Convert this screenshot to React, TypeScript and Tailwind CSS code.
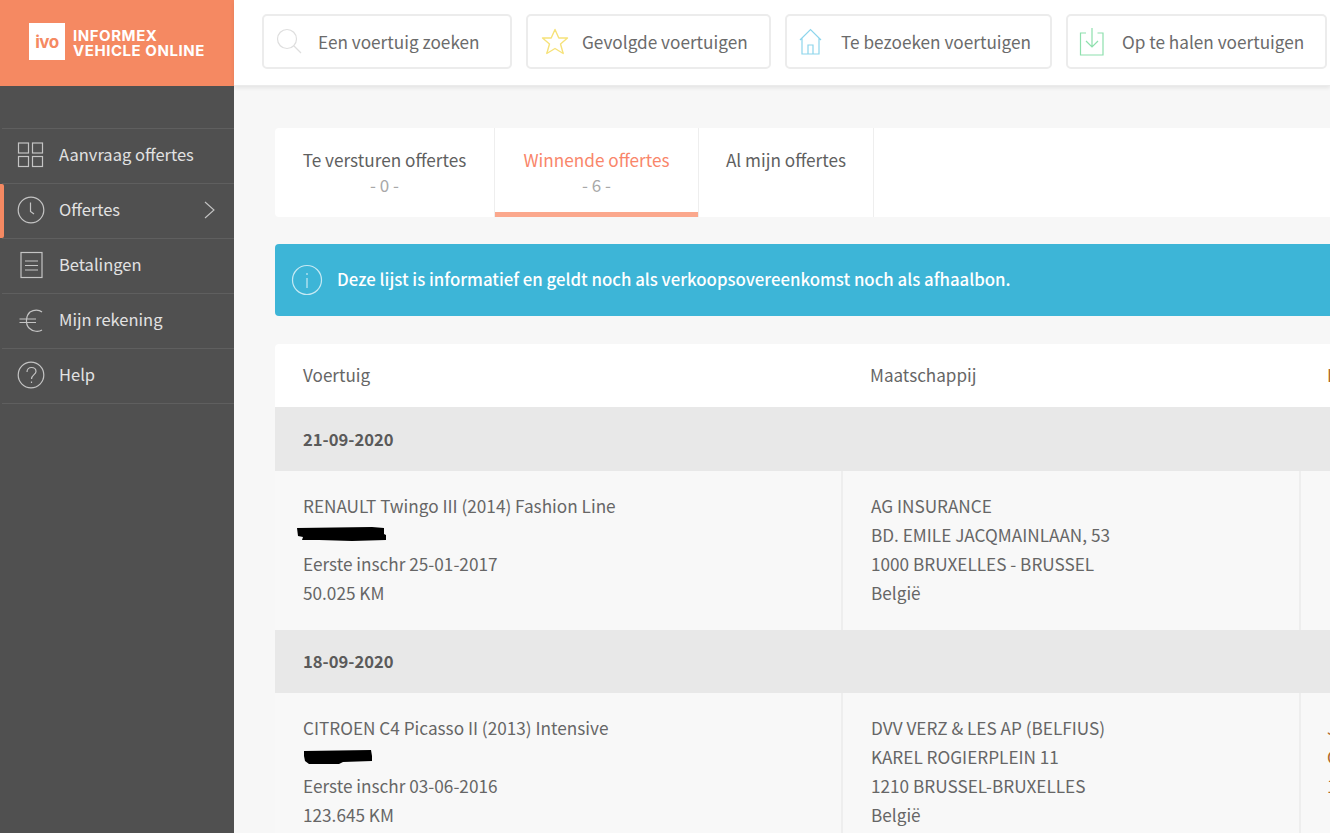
import { ReactNode } from "react";

const menu = [
  { label: "Aanvraag offertes", icon: "grid" },
  { label: "Offertes", icon: "clock", active: true },
  { label: "Betalingen", icon: "doc" },
  { label: "Mijn rekening", icon: "euro" },
  { label: "Help", icon: "help" },
];

function MenuIcon({ name }: { name: string }) {
  return (
    <svg width="30" height="30" viewBox="0 0 30 30" fill="none" stroke="#c4c4c4" strokeWidth="1.2">
      {name === "grid" && (
        <>
          <rect x="2.5" y="3" width="10" height="10" />
          <rect x="16.5" y="3" width="10" height="10" />
          <rect x="2.5" y="16.5" width="10" height="10" />
          <rect x="16.5" y="16.5" width="10" height="10" />
        </>
      )}
      {name === "clock" && (
        <>
          <circle cx="15" cy="15" r="12.8" />
          <path d="M14.5 7.5V16.5L18 19" />
        </>
      )}
      {name === "doc" && (
        <>
          <rect x="5" y="2.5" width="21" height="25" />
          <path d="M9 11H22M9 15.5H22M9 20H22" />
        </>
      )}
      {name === "euro" && (
        <path d="M26 7C23 4.5 18 4.5 14 7C10 10.5 9 19 13 23C17 27 23 27 26 25M3.5 14H20M3.5 17.5H20" />
      )}
      {name === "help" && (
        <>
          <circle cx="15" cy="15" r="12.8" />
          <path d="M11 12C11 9 13 7.5 15.5 7.5C18 7.5 20 9 20 11.5C20 14.5 15.5 15 15.5 19M15.5 21.5V23" />
        </>
      )}
    </svg>
  );
}

function Sidebar() {
  return (
    <aside className="w-[234px] shrink-0 flex flex-col bg-[#505050]">
      <div className="h-[86px] bg-[#f58962] flex items-center pl-[29px] gap-[8px] pb-[3px] shrink-0">
        <div className="w-[36px] h-[37px] bg-white flex items-center justify-center text-[#f58962] text-[17px] font-bold pt-[3px] font-['Inter',sans-serif] tracking-tight">
          ivo
        </div>
        <div className="text-white text-[15px] font-bold leading-[15px] tracking-[0.55px] font-['Inter',sans-serif] mt-[3px]">
          <div>INFORMEX</div>
          <div className="whitespace-nowrap">VEHICLE ONLINE</div>
        </div>
      </div>
      <nav className="mt-[42px] border-t border-[#5f5f5f] ml-[2px]">
        {menu.map((m) => (
          <div key={m.label} className="relative h-[55px] flex items-center border-b border-[#5f5f5f] pl-[14px] pb-[2px] text-[#e2e2e2] text-[16.5px]">
            {m.active && <div className="absolute left-[-2px] top-0 bottom-0 w-[4px] rounded-r-[2px] bg-[#f58962]" />}
            <MenuIcon name={m.icon} />
            <span className="ml-[13px] mb-[2px]">{m.label}</span>
            {m.active && (
              <svg className="absolute right-[18px] top-[16px]" width="13" height="20" viewBox="0 0 13 20" fill="none" stroke="#c4c4c4" strokeWidth="1.1">
                <path d="M2 2L11 10L2 18" />
              </svg>
            )}
          </div>
        ))}
      </nav>
    </aside>
  );
}

function TopButton({ w, icon, label }: { w: string; icon: ReactNode; label: string }) {
  return (
    <div className={`${w} h-[55px] shrink-0 flex items-center bg-white border-2 border-[#ececec] rounded-[5px] text-[#6b6b6b] text-[17.2px]`}>
      <div className="w-[54px] pl-[12px]">{icon}</div>
      <span className="whitespace-nowrap">{label}</span>
    </div>
  );
}

function TopBar() {
  return (
    <header className="h-[86px] shrink-0 bg-white shadow-[0_2px_4px_rgba(0,0,0,0.08)] border-b border-[#ebebeb] flex gap-[14px] pl-[28px] pt-[14px] relative">
      <TopButton
        w="w-[250px]"
        label="Een voertuig zoeken"
        icon={
          <svg className="-ml-px" width="30" height="30" viewBox="0 0 30 30" fill="none" stroke="#dedede" strokeWidth="1.2">
            <circle cx="12" cy="12" r="9.5" />
            <path d="M19 19L26 26" />
          </svg>
        }
      />
      <TopButton
        w="w-[245px]"
        label="Gevolgde voertuigen"
        icon={
          <svg width="30" height="30" viewBox="0 0 30 30" fill="none" stroke="#f6e27a" strokeWidth="1.4">
            <path d="M15 2.5L18.8 11H27.5L20.5 17L23.2 26.5L15 21.5L6.8 26.5L9.5 17L2.5 11H11.2Z" strokeLinejoin="round" />
          </svg>
        }
      />
      <TopButton
        w="w-[267px]"
        label="Te bezoeken voertuigen"
        icon={
          <svg className="-ml-[3px]" width="30" height="30" viewBox="0 0 30 30" fill="none" stroke="#8dd5ec" strokeWidth="1.2">
            <path d="M4 13L14.5 2.5L25 13M6 11V27H23V11M12 27V18H17V27" />
          </svg>
        }
      />
      <TopButton
        w="w-[261px]"
        label="Op te halen voertuigen"
        icon={
          <svg className="-ml-[3px]" width="30" height="30" viewBox="0 0 30 30" fill="none" stroke="#8ee0ad" strokeWidth="1.2">
            <path d="M9 6H3.5V28H26V6H20.5M15 1V19M9 14L15 20L21 14" />
          </svg>
        }
      />
    </header>
  );
}

function Tabs() {
  const tabs = [
    { label: "Te versturen offertes", count: "- 0 -", w: "w-[220px]" },
    { label: "Winnende offertes", count: "- 6 -", w: "w-[204px]", active: true },
    { label: "Al mijn offertes", w: "w-[175px]" },
  ];
  return (
    <div className="h-[89px] bg-white rounded-l-[4px] flex shrink-0">
      {tabs.map((t) => (
        <div key={t.label} className={`${t.w} relative border-r border-[#eeeeee] text-center pt-[20px] text-[17.2px] leading-[24px] ${t.active ? "text-[#f9866a]" : "text-[#5f5f5f]"}`}>
          <div>{t.label}</div>
          {t.count && <div className="text-[#a8a8a8] text-[17px] leading-[25px]">{t.count}</div>}
          {t.active && <div className="absolute left-0 right-0 bottom-0 h-[5px] bg-[#fba88d]" />}
        </div>
      ))}
    </div>
  );
}

function Notice() {
  return (
    <div className="mt-[27px] h-[72px] bg-[#3db5d7] rounded-l-[4px] flex items-center pl-[16px] text-white text-[16.8px] font-medium whitespace-nowrap shrink-0">
      <svg width="32" height="32" viewBox="0 0 32 32" fill="none" stroke="#c6e9f3" strokeWidth="1.2">
        <circle cx="16" cy="16" r="14.5" />
        <path d="M16 14V24M16 9V11" />
      </svg>
      <span className="ml-[14px] mb-px">Deze lijst is informatief en geldt noch als verkoopsovereenkomst noch als afhaalbon.</span>
    </div>
  );
}

function DateRow({ date, className }: { date: string; className: string }) {
  return (
    <div className={`${className} bg-[#e8e8e8] flex items-center pl-[28px] text-[#5a5a5a] text-[16.6px] font-bold`}>{date}</div>
  );
}

// hand-drawn black-out over the licence plate
function Redacted({ w, h, offset, d }: { w: number; h: number; offset: string; d: string }) {
  return (
    <svg className={`${offset} block`} width={w} height={h} viewBox={`0 0 ${w} ${h}`} fill="#000">
      <path d={d} />
    </svg>
  );
}

type Offer = {
  vehicle: string;
  first: string;
  km: string;
  company: string[];
  extra?: string[];
  plate: { w: number; h: number; offset: string; d: string };
};

function OfferRow({ vehicle, first, km, company, extra, plate }: Offer) {
  return (
    <div className="h-[159px] bg-[#f8f8f8] flex text-[#666666] text-[17.2px] leading-[29px]">
      <div className="w-[568px] shrink-0 border-r-2 border-[#eeeeee] pl-[28px] pt-[20px]">
        <div>{vehicle}</div>
        <div className="h-[29px] flex items-center">
          <Redacted {...plate} />
        </div>
        <div>{first}</div>
        <div>{km}</div>
      </div>
      <div className="w-[458px] shrink-0 border-r-2 border-[#eeeeee] pl-[28px] pt-[20px]">
        {company.map((c) => (
          <div key={c}>{c}</div>
        ))}
      </div>
      <div className="pl-[26px] pt-[20px] text-[#b06a2c]">
        {extra?.map((c) => (
          <div key={c}>{c}</div>
        ))}
      </div>
    </div>
  );
}

function OfferTable() {
  return (
    <div className="mt-[28px] bg-white rounded-l-[4px]">
      <div className="h-[63px] flex items-center pb-[2px] text-[#666666] text-[17.1px]">
        <div className="w-[568px] pl-[28px] shrink-0">Voertuig</div>
        <div className="w-[458px] pl-[27px] shrink-0">Maatschappij</div>
        <div className="pl-[26px] text-[#b06a2c]">L</div>
      </div>
      <DateRow date="21-09-2020" className="h-[64px] pt-px" />
      <OfferRow
        vehicle="RENAULT Twingo III (2014) Fashion Line"
        first="Eerste inschr 25-01-2017"
        km="50.025 KM"
        company={["AG INSURANCE", "BD. EMILE JACQMAINLAAN, 53", "1000 BRUXELLES - BRUSSEL", "België"]}
        plate={{ w: 90, h: 15, offset: "-ml-[6px]", d: "M0 1L75 0L87 1L87 7L89 8L89 13L55 14L22 13L5 13L6 10L1 9Z" }}
      />
      <DateRow date="18-09-2020" className="h-[63px] pb-px" />
      <OfferRow
        vehicle="CITROEN C4 Picasso II (2013) Intensive"
        first="Eerste inschr 03-06-2016"
        km="123.645 KM"
        company={["DVV VERZ & LES AP (BELFIUS)", "KAREL ROGIERPLEIN 11", "1210 BRUSSEL-BRUXELLES", "België"]}
        extra={["J", "C", "1"]}
        plate={{ w: 70, h: 16, offset: "ml-0", d: "M1 2L68 1L69 7L69 12L40 13L36 15L6 15L2 12L1 7Z" }}
      />
    </div>
  );
}

export default function App() {
  return (
    <div className="w-[1330px] h-[833px] overflow-hidden flex bg-[#f7f7f7] font-['Noto_Sans_CJK_SC','Open_Sans',sans-serif]">
      <Sidebar />
      <div className="flex-1 min-w-0 flex flex-col">
        <TopBar />
        <main className="flex-1 min-h-0 overflow-hidden pl-[41px] pt-[42px] w-[1200px]">
          <Tabs />
          <Notice />
          <OfferTable />
        </main>
      </div>
    </div>
  );
}
